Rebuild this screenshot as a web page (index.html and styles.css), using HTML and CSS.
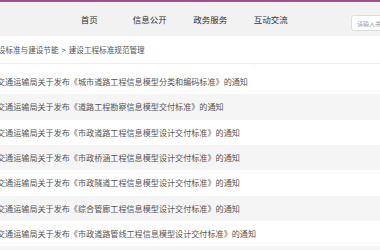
FILE: index.html
```html
<!DOCTYPE html>
<html lang="zh-CN">
  <head>
    <meta name="viewport" content="width=device-width, initial-scale=1.0">
    <meta charset="utf-8">
    <title>建设工程标准规范管理</title>
    <link rel="stylesheet" href="styles.css">
  </head>
  <body>
    <header class="topbar">
      <div class="topbar-inner">
        <nav class="nav">
          <a href="#">首页</a>
          <a href="#">信息公开</a>
          <a href="#">政务服务</a>
          <a href="#">互动交流</a>
        </nav>
        <div class="search">
          <input type="text" placeholder="请输入关键字">
        </div>
      </div>
    </header>
    <main class="page">
      <div class="crumbs">
        <a href="#">工程建设标准与建设节能</a>
        <span class="sep">&gt;</span>
        <a href="#">建设工程标准规范管理</a>
      </div>
      <ul class="list">
        <li><a href="#">交通运输局关于发布《城市道路工程信息模型分类和编码标准》的通知</a></li>
        <li><a href="#">交通运输局关于发布《道路工程勘察信息模型交付标准》的通知</a></li>
        <li><a href="#">交通运输局关于发布《市政道路工程信息模型设计交付标准》的通知</a></li>
        <li><a href="#">交通运输局关于发布《市政桥涵工程信息模型设计交付标准》的通知</a></li>
        <li><a href="#">交通运输局关于发布《市政隧道工程信息模型设计交付标准》的通知</a></li>
        <li><a href="#">交通运输局关于发布《综合管廊工程信息模型设计交付标准》的通知</a></li>
        <li><a href="#">交通运输局关于发布《市政道路管线工程信息模型设计交付标准》的通知</a></li>
        <li><a href="#">交通运输局关于发布《市政排水工程信息模型设计交付标准》的通知</a></li>
      </ul>
    </main>
  </body>
</html>
```

FILE: styles.css
```css
*,*::before,*::after {
  box-sizing: border-box;
}

html, body {
  margin: 0;
  padding: 0;
  height: 100%;
  overflow: hidden;
}

body {
  font-family: "Noto Sans CJK SC", "Noto Sans", sans-serif;
  color: #555;
  background: #fff;
  display: flex;
  flex-direction: column;
  align-items: center;
}

ul {
  list-style: none;
  margin: 0;
  padding: 0;
}

a {
  color: inherit;
  text-decoration: none;
}

input {
  font-family: inherit;
  margin: 0;
  outline: none;
}

/* top bar */
.topbar {
  width: 100%;
  display: flex;
  justify-content: center;
  background: #f2f2f2;
  border-top: 2px solid #a2518f;
  height: 36px;
  flex-shrink: 0;
}

.topbar-inner {
  width: 400px;
  flex-shrink: 0;
  display: flex;
  align-items: center;
  padding-left: 69px;
}

.nav {
  display: flex;
}

.nav a {
  width: 60.5px;
  text-align: center;
  font-size: 8.5px;
  color: #333;
}

.search {
  margin-left: 50px;
}

.search input {
  width: 80px;
  height: 16px;
  border: 1px solid #ddd;
  border-radius: 3px;
  background: #fff;
  padding: 0 5px;
  font-size: 6px;
}

.search input::placeholder {
  color: #999;
}

/* content */
.page {
  width: 400px;
  flex-shrink: 0;
  padding-left: 7px;
}

.crumbs {
  display: flex;
  align-items: center;
  gap: 3px;
  height: 28px;
  font-size: 7.6px;
  color: #555;
  margin-left: -22px;
  border-bottom: 1px solid #eee;
}

.list {
  margin-left: -10px;
  padding-top: 5px;
}

.list li {
  height: 25.33px;
  display: flex;
  align-items: center;
  padding-left: 10px;
  font-size: 8.1px;
  color: #555;
  white-space: nowrap;
}

.list li:nth-child(even) {
  background: #f5f5f5;
}
```
